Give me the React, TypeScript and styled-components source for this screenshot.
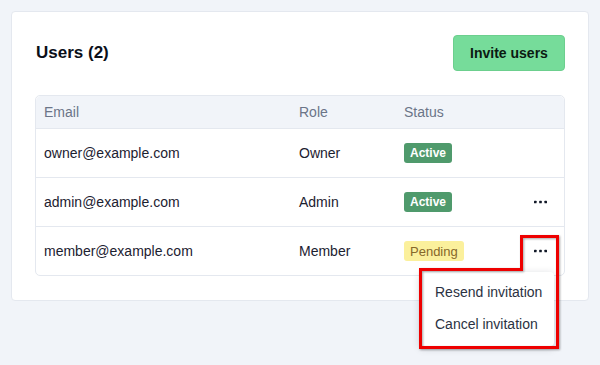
import * as React from "react";
import styled, { createGlobalStyle } from "styled-components";

type Status = "active" | "pending";

interface User {
  email: string;
  role: string;
  status: Status;
  actions: boolean;
}

const users: User[] = [
  { email: "owner@example.com", role: "Owner", status: "active", actions: false },
  { email: "admin@example.com", role: "Admin", status: "active", actions: true },
  { email: "member@example.com", role: "Member", status: "pending", actions: true },
];

const GlobalStyle = createGlobalStyle`
  html, body {
    margin: 0;
    padding: 0;
    background: #f1f4f9;
    font-family: "Liberation Sans", Arial, sans-serif;
  }
  * { box-sizing: border-box; }
`;

const Page = styled.div`
  position: relative;
  width: 600px;
  height: 365px;
  padding: 11px;
`;

const Card = styled.section`
  width: 578px;
  height: 290px;
  background: #ffffff;
  border: 1px solid #e4e8ef;
  border-radius: 4px;
  padding: 23px 23px 24px 23px;
  display: flex;
  flex-direction: column;
  gap: 24px;
`;

const CardHeader = styled.header`
  display: flex;
  align-items: center;
  justify-content: space-between;
  height: 36px;
`;

const Title = styled.h2`
  margin: 0 0 0 1px;
  font-size: 17px;
  font-weight: 700;
  color: #0b0f19;
`;

const InviteButton = styled.button`
  width: 112px;
  height: 36px;
  background: #76dc9a;
  border: 1px solid #6ccf8e;
  border-radius: 4px;
  font-family: inherit;
  font-size: 14px;
  font-weight: 700;
  color: #0b1a12;
  cursor: pointer;
`;

const Table = styled.div`
  border: 1px solid #e4e8ef;
  border-radius: 5px;
`;

const Row = styled.div<{ $head?: boolean }>`
  display: grid;
  grid-template-columns: 255px 105px 1fr 56px;
  align-items: center;
  height: ${(p) => (p.$head ? "32px" : "49px")};
  background: ${(p) => (p.$head ? "#f1f4f9" : "transparent")};
  border-top: ${(p) => (p.$head ? "none" : "1px solid #e4e8ef")};
  border-radius: ${(p) => (p.$head ? "5px 5px 0 0" : "0")};
  font-size: 14px;
  color: ${(p) => (p.$head ? "#6b7588" : "#1c2130")};
`;

const Cell = styled.div`
  padding-left: 8px;
  position: relative;
`;

const ActionCell = styled.div`
  position: relative;
  display: flex;
  justify-content: center;
`;

const Badge = styled.span<{ $status: Status }>`
  display: inline-flex;
  align-items: center;
  height: 20px;
  padding: 0 6px;
  border-radius: 3px;
  font-size: ${(p) => (p.$status === "active" ? "12px" : "13px")};
  font-weight: ${(p) => (p.$status === "active" ? 700 : 400)};
  background: ${(p) => (p.$status === "active" ? "#4f9a6c" : "#fbf09c")};
  color: ${(p) => (p.$status === "active" ? "#ffffff" : "#86672a")};
`;

const DotsButton = styled.button`
  width: 28px;
  height: 28px;
  margin-left: 8px;
  display: flex;
  align-items: center;
  justify-content: center;
  background: transparent;
  border: none;
  padding: 0;
  cursor: pointer;
`;

const Menu = styled.ul`
  position: absolute;
  top: 35px;
  right: 10px;
  width: 134px;
  margin: 0;
  padding: 4px 0 6px;
  list-style: none;
  background: #ffffff;
  border-radius: 4px;
  box-shadow: 0 2px 8px rgba(15, 23, 42, 0.18);
  z-index: 2;
`;

const MenuItem = styled.li`
  height: 32px;
  display: flex;
  align-items: center;
  padding-left: 15px;
  font-size: 14px;
  color: #2b3242;
  white-space: nowrap;
`;

const Highlight = styled.svg`
  position: absolute;
  left: 0;
  top: 0;
  pointer-events: none;
  z-index: 3;
`;

const Dots = () => (
  <svg width="13" height="4" viewBox="0 0 13 4">
    <rect x="0" y="0.75" width="2.6" height="2.6" rx="0.6" fill="#111827" />
    <rect x="5.2" y="0.75" width="2.6" height="2.6" rx="0.6" fill="#111827" />
    <rect x="10.4" y="0.75" width="2.6" height="2.6" rx="0.6" fill="#111827" />
  </svg>
);

const statusLabel: Record<Status, string> = { active: "Active", pending: "Pending" };

export default function App() {
  return (
    <Page>
      <GlobalStyle />
      <Card>
        <CardHeader>
          <Title>Users (2)</Title>
          <InviteButton>Invite users</InviteButton>
        </CardHeader>
        <Table>
          <Row $head>
            <Cell>Email</Cell>
            <Cell>Role</Cell>
            <Cell>Status</Cell>
            <Cell />
          </Row>
          {users.map((u, i) => (
            <Row key={u.email}>
              <Cell>{u.email}</Cell>
              <Cell>{u.role}</Cell>
              <Cell>
                <Badge $status={u.status}>{statusLabel[u.status]}</Badge>
              </Cell>
              <ActionCell>
                {u.actions && (
                  <DotsButton aria-label="More actions">
                    <Dots />
                  </DotsButton>
                )}
                {i === users.length - 1 && (
                  <Menu>
                    <MenuItem>Resend invitation</MenuItem>
                    <MenuItem>Cancel invitation</MenuItem>
                  </Menu>
                )}
              </ActionCell>
            </Row>
          ))}
        </Table>
      </Card>
      <Highlight width="600" height="365" viewBox="0 0 600 365">
        <defs>
          <filter id="hl-shadow" x="-10%" y="-10%" width="120%" height="120%">
            <feDropShadow dx="1" dy="1" stdDeviation="1" floodColor="#000" floodOpacity="0.35" />
          </filter>
        </defs>
        <polygon
          points="521.5,236.5 557.5,236.5 557.5,347.5 420.5,347.5 420.5,269.5 521.5,269.5"
          fill="none"
          stroke="#ee0000"
          strokeWidth="3"
          filter="url(#hl-shadow)"
        />
      </Highlight>
    </Page>
  );
}
